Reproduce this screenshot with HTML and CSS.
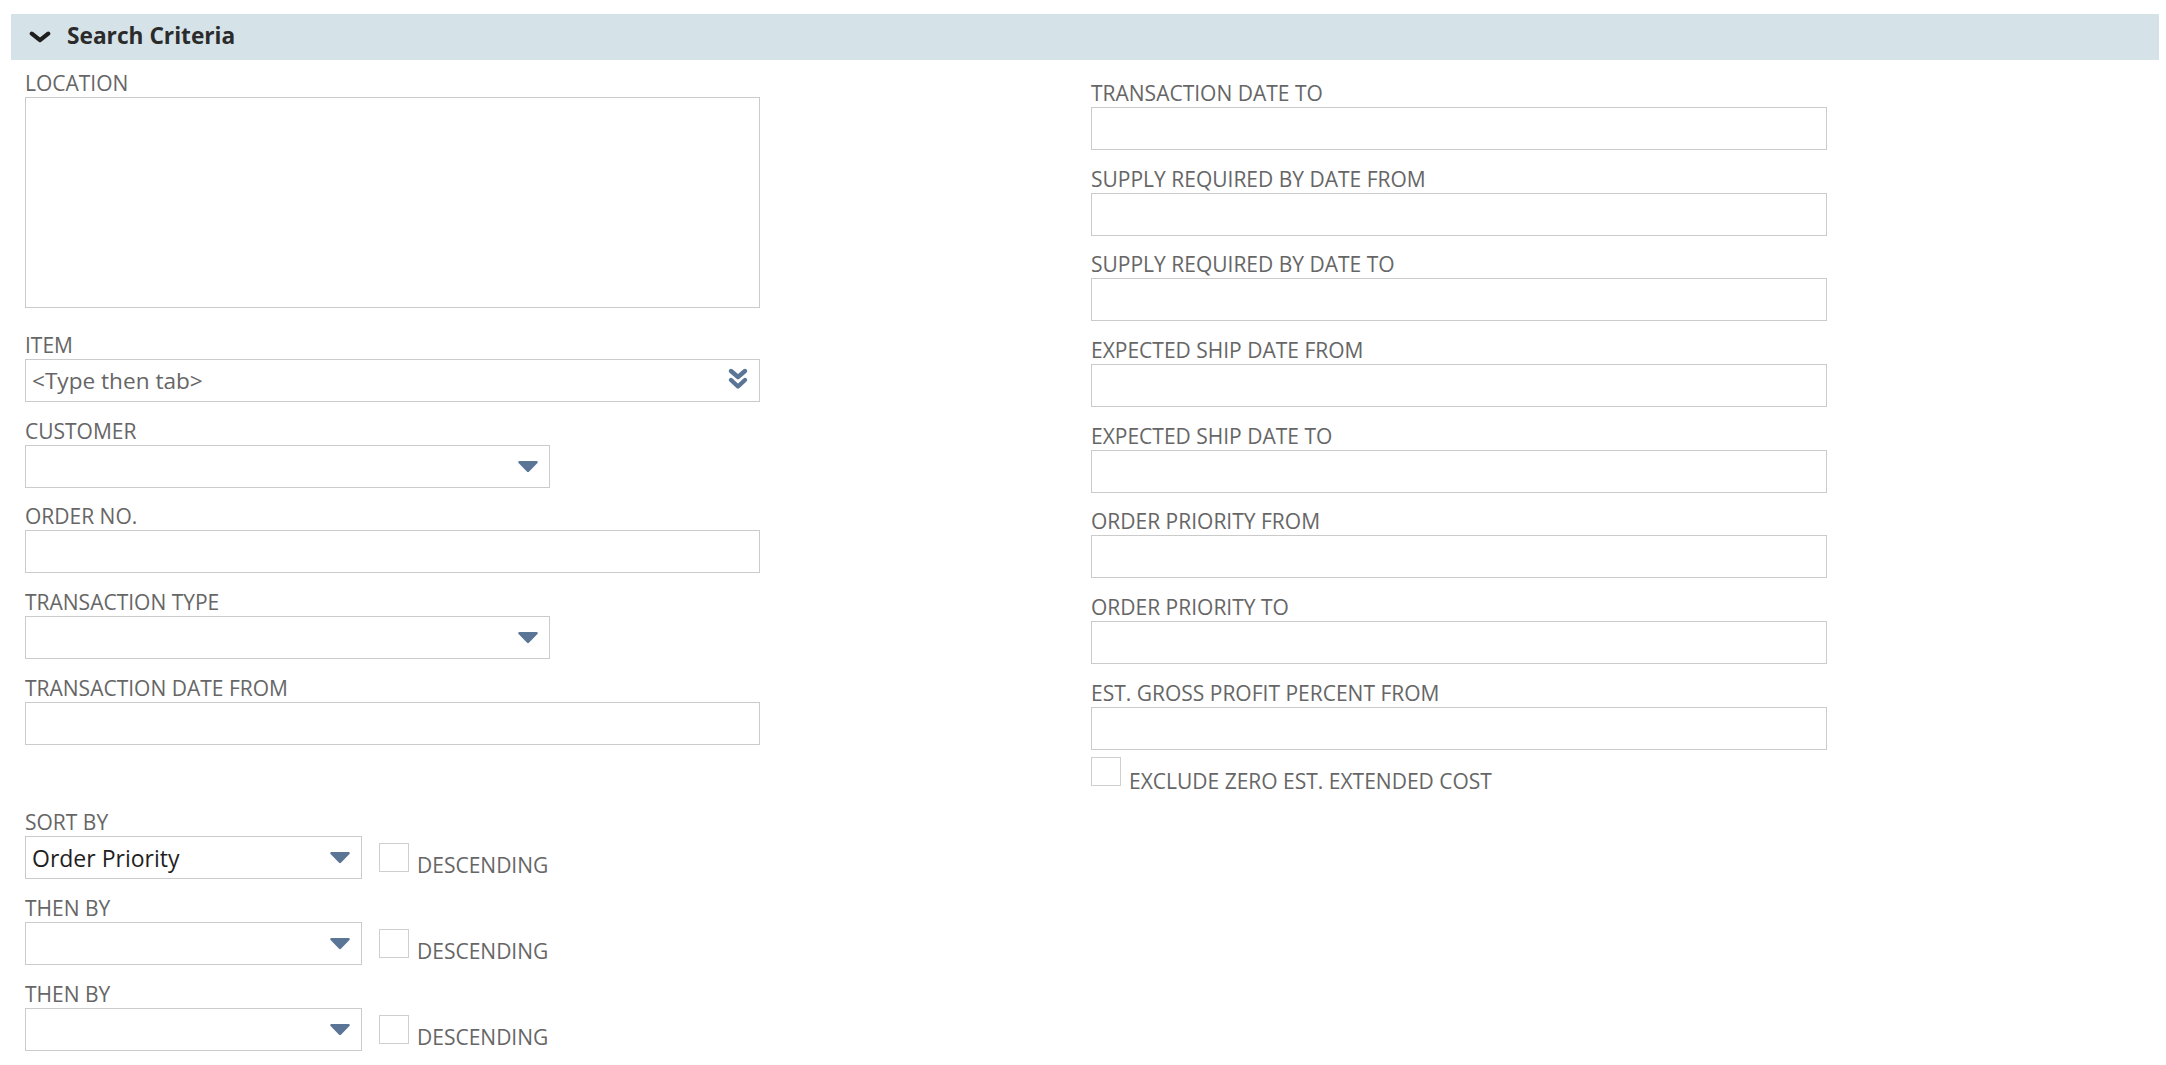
FILE: index.html
```html
<!DOCTYPE html>
<html lang="en">
<head>
<meta charset="utf-8">
<title>Search Criteria</title>
<link rel="stylesheet" href="styles.css">
</head>
<body>
<section class="panel">
  <header class="panel-head">
    <svg class="head-chevron" width="22" height="12" viewBox="0 0 22 12"><path d="M2.8 2.6 L11 9.2 L19.2 2.6" fill="none" stroke="#1e1e1e" stroke-width="4.2" stroke-linecap="round" stroke-linejoin="round"/></svg>
    <h2 class="head-title">Search Criteria</h2>
  </header>

  <div class="form-grid">
    <div class="col col-left">
      <div class="field field-tall">
        <label class="lbl">LOCATION</label>
        <textarea class="box area"></textarea>
      </div>
      <div class="field">
        <label class="lbl">ITEM</label>
        <div class="box full with-icon">
          <span class="placeholder">&lt;Type then tab&gt;</span>
          <svg class="dbl-chev" width="22" height="24" viewBox="0 0 22 24"><path d="M4 4 L11 10 L18 4" fill="none" stroke="#5a7596" stroke-width="4.4" stroke-linecap="round" stroke-linejoin="round"/><path d="M4 13 L11 19.5 L18 13" fill="none" stroke="#5a7596" stroke-width="4.4" stroke-linecap="round" stroke-linejoin="round"/></svg>
        </div>
      </div>
      <div class="field">
        <label class="lbl">CUSTOMER</label>
        <div class="box select mid">
          <span class="value"></span>
          <svg class="tri" width="22" height="13" viewBox="0 0 22 13"><path d="M2.5 2.2 H19.5 L11 10.8 Z" fill="#5b7596" stroke="#5b7596" stroke-width="2.6" stroke-linejoin="round"/></svg>
        </div>
      </div>
      <div class="field">
        <label class="lbl">ORDER NO.</label>
        <input class="box full" type="text">
      </div>
      <div class="field">
        <label class="lbl">TRANSACTION TYPE</label>
        <div class="box select mid">
          <span class="value"></span>
          <svg class="tri" width="22" height="13" viewBox="0 0 22 13"><path d="M2.5 2.2 H19.5 L11 10.8 Z" fill="#5b7596" stroke="#5b7596" stroke-width="2.6" stroke-linejoin="round"/></svg>
        </div>
      </div>
      <div class="field">
        <label class="lbl">TRANSACTION DATE FROM</label>
        <input class="box full" type="text">
      </div>

      <div class="sort-group">
        <div class="field">
          <label class="lbl">SORT BY</label>
          <div class="sort-row">
            <div class="box select small">
              <span class="value">Order Priority</span>
              <svg class="tri" width="22" height="13" viewBox="0 0 22 13"><path d="M2.5 2.2 H19.5 L11 10.8 Z" fill="#5b7596" stroke="#5b7596" stroke-width="2.6" stroke-linejoin="round"/></svg>
            </div>
            <span class="check"></span>
            <span class="check-lbl">DESCENDING</span>
          </div>
        </div>
        <div class="field">
          <label class="lbl">THEN BY</label>
          <div class="sort-row">
            <div class="box select small">
              <span class="value"></span>
              <svg class="tri" width="22" height="13" viewBox="0 0 22 13"><path d="M2.5 2.2 H19.5 L11 10.8 Z" fill="#5b7596" stroke="#5b7596" stroke-width="2.6" stroke-linejoin="round"/></svg>
            </div>
            <span class="check"></span>
            <span class="check-lbl">DESCENDING</span>
          </div>
        </div>
        <div class="field">
          <label class="lbl">THEN BY</label>
          <div class="sort-row">
            <div class="box select small">
              <span class="value"></span>
              <svg class="tri" width="22" height="13" viewBox="0 0 22 13"><path d="M2.5 2.2 H19.5 L11 10.8 Z" fill="#5b7596" stroke="#5b7596" stroke-width="2.6" stroke-linejoin="round"/></svg>
            </div>
            <span class="check"></span>
            <span class="check-lbl">DESCENDING</span>
          </div>
        </div>
      </div>
    </div>

    <div class="col col-right">
      <div class="field"><label class="lbl">TRANSACTION DATE TO</label><input class="box full" type="text"></div>
      <div class="field"><label class="lbl">SUPPLY REQUIRED BY DATE FROM</label><input class="box full" type="text"></div>
      <div class="field"><label class="lbl">SUPPLY REQUIRED BY DATE TO</label><input class="box full" type="text"></div>
      <div class="field"><label class="lbl">EXPECTED SHIP DATE FROM</label><input class="box full" type="text"></div>
      <div class="field"><label class="lbl">EXPECTED SHIP DATE TO</label><input class="box full" type="text"></div>
      <div class="field"><label class="lbl">ORDER PRIORITY FROM</label><input class="box full" type="text"></div>
      <div class="field"><label class="lbl">ORDER PRIORITY TO</label><input class="box full" type="text"></div>
      <div class="field field-last">
        <label class="lbl">EST. GROSS PROFIT PERCENT FROM</label>
        <input class="box full" type="text">
      </div>
      <div class="check-row">
        <span class="check"></span>
        <span class="check-lbl">EXCLUDE ZERO EST. EXTENDED COST</span>
      </div>
    </div>
  </div>
</section>
</body>
</html>
```

FILE: styles.css
```css
* { box-sizing: border-box; }

html, body {
  margin: 0;
  padding: 0;
  background: #ffffff;
}

body {
  font-family: "Open Sans", "Liberation Sans", sans-serif;
  color: #666666;
  width: 2166px;
  height: 1065px;
  overflow: hidden;
}

.panel-head {
  margin: 14px 7px 0 11px;
  height: 46px;
  background: #d5e2e8;
  display: flex;
  align-items: center;
  padding: 0 0 3px 18px;
}

.head-chevron {
  display: block;
  margin-top: 3px;
}

.head-title {
  margin: 0 0 0 16px;
  font-size: 22.7px;
  font-weight: 700;
  color: #2b2b2b;
  line-height: 30px;
}

.form-grid {
  display: grid;
  grid-template-columns: 735px 736px;
  column-gap: 331px;
  padding: 12px 0 0 25px;
}

.col-right {
  padding-top: 10px;
}

.field {
  display: flex;
  flex-direction: column;
  margin-bottom: 17.7px;
}

.field-tall {
  margin-bottom: 26px;
}

.field-last {
  margin-bottom: 7px;
}

.lbl {
  font-size: 21px;
  line-height: 22px;
  height: 22px;
  margin-bottom: 3px;
  color: #666666;
  white-space: nowrap;
}

.box {
  display: flex;
  align-items: center;
  height: 43px;
  border: 1px solid #cbcbcb;
  background: #ffffff;
  font-family: "Open Sans", "Liberation Sans", sans-serif;
  font-size: 23px;
  color: #222222;
  padding: 0 10px 0 6px;
  outline: none;
  margin: 0;
  border-radius: 0;
}

.full { width: 735px; }
.col-right .full { width: 736px; }
.mid { width: 525px; }
.small { width: 337px; }

.area {
  display: block;
  width: 735px;
  height: 211px;
  resize: none;
}

.with-icon, .select {
  justify-content: space-between;
}

.placeholder {
  color: #666666;
  font-size: 22.6px;
  line-height: 30px;
}

.value {
  color: #1f1f1f;
  font-size: 23px;
  line-height: 30px;
}

.dbl-chev {
  display: block;
  margin-top: -3px;
}

.tri {
  display: block;
  margin-right: 0;
}

.sort-group {
  margin-top: 66.5px;
}

.sort-row {
  display: flex;
  align-items: flex-start;
}

.check {
  display: block;
  width: 30px;
  height: 29px;
  border: 1px solid #cfcfcf;
  background: #ffffff;
  flex: none;
}

.sort-row .check {
  margin: 7px 0 0 17px;
}

.check-lbl {
  font-size: 21px;
  line-height: 22px;
  color: #666666;
  margin: 18px 0 0 8px;
  white-space: nowrap;
}

.check-row {
  display: flex;
  align-items: flex-start;
}

.check-row .check-lbl {
  margin-top: 13px;
}
```
